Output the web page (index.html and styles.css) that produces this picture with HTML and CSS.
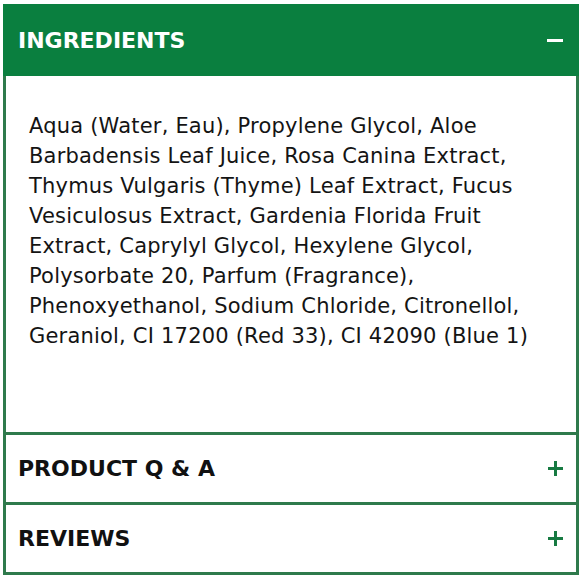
FILE: index.html
```html
<!DOCTYPE html>
<html>
<head>
<meta charset="utf-8">
<link rel="stylesheet" href="styles.css">
</head>
<body>
<div class="accordion">
  <section class="panel open">
    <div class="panel-head">
      <h2 class="title">INGREDIENTS</h2>
      <span class="minus"></span>
    </div>
    <div class="panel-body">
      <p class="ingredients">Aqua (Water, Eau), Propylene Glycol, Aloe Barbadensis Leaf Juice, Rosa Canina Extract, Thymus Vulgaris (Thyme) Leaf Extract, Fucus Vesiculosus Extract, Gardenia Florida Fruit Extract, Caprylyl Glycol, Hexylene Glycol, Polysorbate 20, Parfum (Fragrance), Phenoxyethanol, Sodium Chloride, Citronellol, Geraniol, CI 17200 (Red 33), CI 42090 (Blue 1)</p>
    </div>
  </section>
  <section class="panel">
    <div class="panel-head closed">
      <h2 class="title dark">PRODUCT Q &amp; A</h2>
      <span class="plus"></span>
    </div>
  </section>
  <section class="panel last">
    <div class="panel-head closed">
      <h2 class="title dark">REVIEWS</h2>
      <span class="plus"></span>
    </div>
  </section>
</div>
</body>
</html>
```
FILE: styles.css
```css
html, body {
  margin: 0;
  padding: 0;
  background: #fff;
}
body {
  font-family: "DejaVu Sans", sans-serif;
}
.accordion {
  margin: 4px 1px 0 3px;
  border-left: 3px solid #2f7a4c;
  border-right: 3px solid #2f7a4c;
  border-bottom: 3px solid #2f7a4c;
}
.panel {
  border-bottom: 3px solid #2f7a4c;
}
.panel.last {
  border-bottom: none;
}
.panel-head {
  display: flex;
  align-items: center;
  justify-content: space-between;
  height: 72px;
  padding: 0 13px 0 12px;
  background: #0a7f3f;
}
.panel-head.closed {
  background: #fff;
  height: 67px;
}
.open .panel-head {
  margin-left: -3px;
  margin-right: -3px;
  padding-left: 15px;
  padding-right: 16px;
}
.title {
  margin: 0;
  font-size: 22px;
  font-weight: 700;
  color: #fff;
  letter-spacing: 0;
}
.title.dark {
  color: #111;
}
.minus {
  width: 16px;
  height: 3px;
  background: #fff;
}
.plus {
  position: relative;
  width: 15px;
  height: 15px;
}
.plus::before, .plus::after {
  content: "";
  position: absolute;
  background: #177a42;
}
.plus::before {
  left: 0;
  top: 6px;
  width: 15px;
  height: 3px;
}
.plus::after {
  left: 6px;
  top: 0;
  width: 3px;
  height: 15px;
}
.panel-body {
  height: 356px;
  padding: 35px 12px 0 23px;
  box-sizing: border-box;
}
.ingredients {
  margin: 0;
  font-size: 21px;
  line-height: 30px;
  letter-spacing: 0.2px;
  color: #141414;
}
```
